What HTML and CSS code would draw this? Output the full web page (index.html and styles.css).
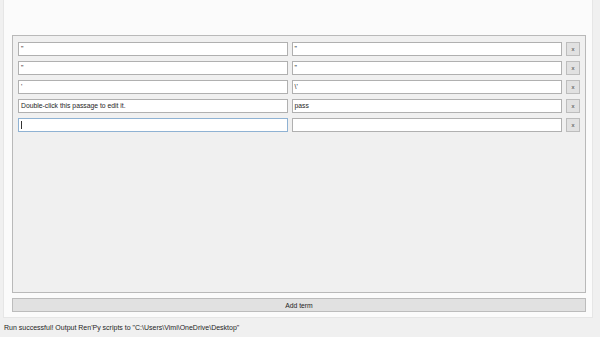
FILE: index.html
```html
<!DOCTYPE html>
<html>
<head>
<meta charset="utf-8">
<link rel="stylesheet" href="styles.css">
</head>
<body>
<div class="panel">
  <div class="group">
    <div class="row">
      <div class="field f1">"</div>
      <div class="field f2">"</div>
      <div class="xbtn">x</div>
    </div>
    <div class="row">
      <div class="field f1">"</div>
      <div class="field f2">"</div>
      <div class="xbtn">x</div>
    </div>
    <div class="row">
      <div class="field f1">'</div>
      <div class="field f2">\'</div>
      <div class="xbtn">x</div>
    </div>
    <div class="row">
      <div class="field f1">Double-click this passage to edit it.</div>
      <div class="field f2">pass</div>
      <div class="xbtn">x</div>
    </div>
    <div class="row">
      <div class="field f1 focus"><span class="caret"></span></div>
      <div class="field f2"></div>
      <div class="xbtn">x</div>
    </div>
  </div>
  <div class="addbtn">Add term</div>
</div>
<div class="status">Run successful! Output Ren'Py scripts to "C:\Users\Vimi\OneDrive\Desktop"</div>
</body>
</html>
```
FILE: styles.css
```css
html, body {
  margin: 0;
  padding: 0;
}
body {
  width: 600px;
  height: 337px;
  background: #f0f0f0;
  font-family: "Liberation Sans", Arial, sans-serif;
  font-size: 6.8px;
  color: #1e1e1e;
  overflow: hidden;
}
.panel {
  margin-left: 3px;
  width: 590px;
  height: 318px;
  box-sizing: border-box;
  background: #fbfbfb;
  border-left: 1px solid #e6e6e6;
  border-right: 1px solid #e6e6e6;
  border-bottom: 1px solid #e6e6e6;
  padding: 35px 6px 0 8px;
  display: flex;
  flex-direction: column;
}
.group {
  height: 258px;
  box-sizing: border-box;
  border: 1px solid #b9b9b9;
  background: #f0f0f0;
  padding: 6px 5px;
  display: flex;
  flex-direction: column;
  gap: 5px;
}
.row {
  display: flex;
  gap: 4px;
  height: 14px;
}
.field {
  box-sizing: border-box;
  height: 14px;
  background: #fff;
  border: 1px solid #b0b0b0;
  padding: 0 2px;
  line-height: 12px;
  white-space: nowrap;
  overflow: hidden;
}
.f1 { width: 270px; }
.f2 { width: 271px; }
.focus {
  border-color: #8fb2d3;
}
.caret {
  display: inline-block;
  width: 1px;
  height: 8px;
  background: #333;
  vertical-align: middle;
}
.xbtn {
  box-sizing: border-box;
  width: 14px;
  height: 14px;
  background: #e1e1e1;
  border: 1px solid #bdbdbd;
  text-align: center;
  line-height: 12px;
  font-size: 6px;
  color: #333;
}
.addbtn {
  margin-top: 5px;
  height: 14px;
  box-sizing: border-box;
  background: #e1e1e1;
  border: 1px solid #bcbcbc;
  text-align: center;
  line-height: 13px;
  color: #1e1e1e;
}
.status {
  padding: 4px 0 0 4px;
  font-size: 7px;
  line-height: 12px;
  color: #1e1e1e;
  white-space: nowrap;
}
```
